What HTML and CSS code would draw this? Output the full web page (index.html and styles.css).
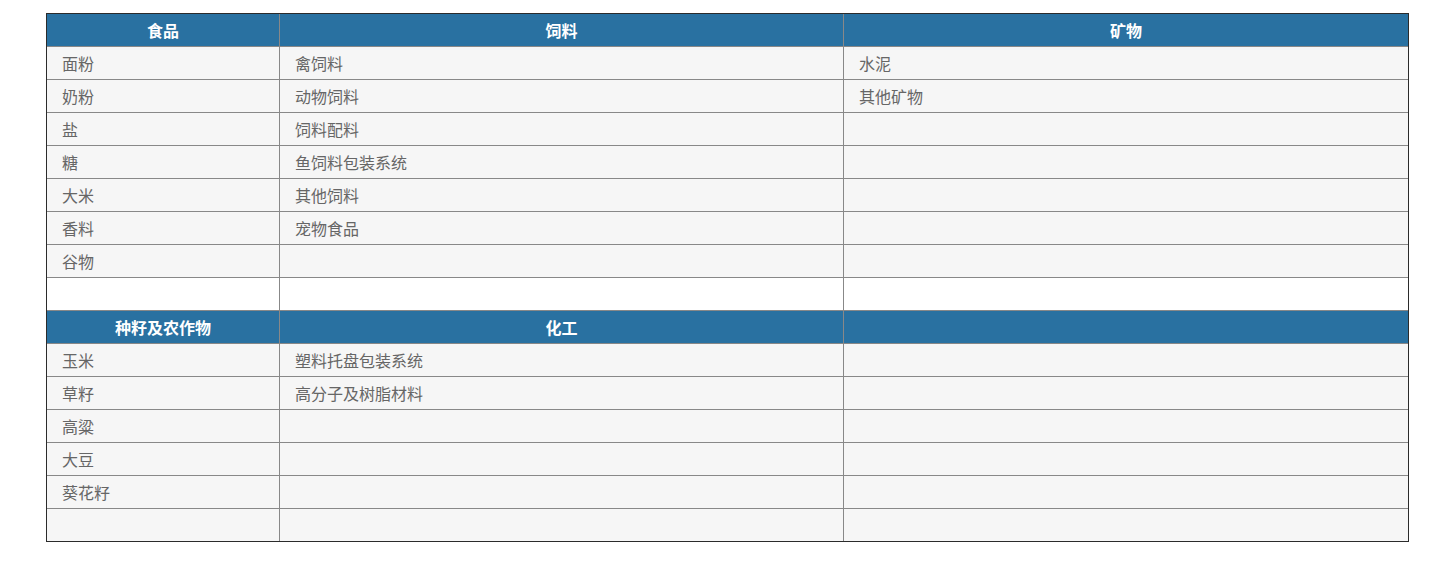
FILE: index.html
```html
<!DOCTYPE html>
<html lang="zh">
<head>
<meta charset="utf-8">
<link rel="stylesheet" href="styles.css">
</head>
<body>
<div class="wrap">
<table class="grid">
<colgroup><col class="c1"><col class="c2"><col class="c3"></colgroup>
<tr class="head"><td>食品</td><td>饲料</td><td>矿物</td></tr>
<tr><td>面粉</td><td>禽饲料</td><td>水泥</td></tr>
<tr><td>奶粉</td><td>动物饲料</td><td>其他矿物</td></tr>
<tr><td>盐</td><td>饲料配料</td><td></td></tr>
<tr><td>糖</td><td>鱼饲料包装系统</td><td></td></tr>
<tr><td>大米</td><td>其他饲料</td><td></td></tr>
<tr><td>香料</td><td>宠物食品</td><td></td></tr>
<tr><td>谷物</td><td></td><td></td></tr>
<tr class="blank"><td></td><td></td><td></td></tr>
<tr class="head"><td>种籽及农作物</td><td>化工</td><td></td></tr>
<tr><td>玉米</td><td>塑料托盘包装系统</td><td></td></tr>
<tr><td>草籽</td><td>高分子及树脂材料</td><td></td></tr>
<tr><td>高粱</td><td></td><td></td></tr>
<tr><td>大豆</td><td></td><td></td></tr>
<tr><td>葵花籽</td><td></td><td></td></tr>
<tr class="last"><td></td><td></td><td></td></tr>
</table>
</div>
</body>
</html>
```
FILE: styles.css
```css
html, body {
  margin: 0;
  padding: 0;
  background: #ffffff;
}
.wrap {
  padding: 13px 0 0 46px;
}
.grid {
  width: 1363px;
  table-layout: fixed;
  border-collapse: separate;
  border-spacing: 0;
  border: 1px solid #2b2b2b;
  font-family: "Noto Sans CJK SC", "Microsoft YaHei", sans-serif;
  font-size: 16px;
  color: #666666;
}
.c1 { width: 233px; }
.c2 { width: 564px; }
.c3 { width: 564px; }
.grid td {
  height: 32px;
  padding: 0 15px;
  border-right: 1px solid #888888;
  border-bottom: 1px solid #888888;
  background: #f6f6f6;
  line-height: 32px;
  white-space: nowrap;
  overflow: hidden;
}
.grid td:last-child {
  border-right: none;
}
.grid tr.last td {
  border-bottom: none;
}
.grid tr.blank td {
  background: #ffffff;
}
.grid tr.head td {
  background: #2971a1;
  color: #ffffff;
  font-weight: bold;
  text-align: center;
}
```
